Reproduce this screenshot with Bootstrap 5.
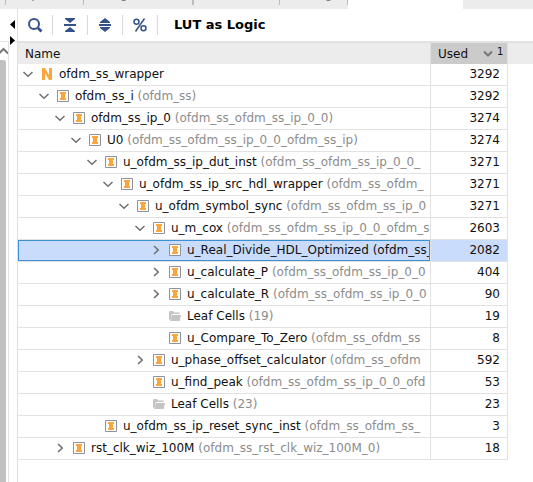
<!DOCTYPE html>
<html lang="en">
<head>
<meta charset="utf-8">
<meta name="viewport" content="width=device-width, initial-scale=1">
<title>LUT as Logic</title>
<link href="https://cdn.jsdelivr.net/npm/bootstrap@5.3.0/dist/css/bootstrap.min.css" rel="stylesheet">
<style>
body{font-family:"DejaVu Sans",sans-serif;font-size:12px;line-height:16px;color:#111;background:#fff}
svg{display:block}
button{border:0;background:none;padding:0;color:inherit}
.tabstrip{height:9px;background:#ececec}
.tabstrip button{flex:none;height:19px;margin-top:-14px;padding-left:10px;line-height:16px;color:#808080;border-right:1px solid #bdbdbd;display:flex;align-items:flex-start}
.tabstrip .lead-in{width:6px;padding:0}
.tabstrip .w-reports{width:78px}
.tabstrip .w-runs{width:110px;border-right-width:2px}
.tabstrip .w-power{width:86px}
.tabstrip .w-timing{width:68px;padding-left:12px}
.tabstrip .w-current{width:115px;height:23px;background:#fff;border:0}
.rail{width:17px;flex:none}
.rail-top{height:33px;padding:11px 0 0 10px;border-bottom:1px solid #e6e6e6}
.rail-top svg+svg{margin-top:7px}
.track{width:9px;border-right:1px solid #e2e2e2}
.track button{height:18px;width:8px}
.thumb{width:6px;background:#c1c1c1;border-top-right-radius:3px}
.pane{border-left:1px solid #e0e0e0;min-width:0}
.tools{height:32px}
.tools button{width:34px;height:20px}
.tools button svg{margin:auto}
.sep{width:1px;height:20px;background:#dadada}
h1{font-size:13px;line-height:16px;font-weight:700;color:#000}
.tree{table-layout:fixed;border-collapse:separate;border-spacing:0}
.num{width:78px}
.rest{width:25px}
.tree th{height:23px;padding:0 0 0 7px;background:#ececec;border-top:2px solid #e2e2e2;font-weight:400;line-height:16px}
.tree th.sorted{background:#cbcbcb;border-left:1px solid #e0e0e0;border-right:1px solid #e0e0e0}
.sorted svg{margin-left:15px;margin-right:4px}
.order{font-size:10px;line-height:12px}
.tree td{height:22px;padding:0;border-bottom:1px solid #e2e2e2;white-space:nowrap;overflow:hidden}
.tree td.val{border-left:1px solid #e2e2e2;border-right:1px solid #e2e2e2;text-align:right;padding:0 7px 2px 0}
.tree td.blank{border:0}
.node{height:21px;padding-bottom:1px;padding-left:calc(4px + var(--d)*16px);overflow:hidden}
.node button,.node .gap-box{flex:none;width:12px;height:12px;margin-right:7px}
.node>svg{flex:none;margin-right:6px}
.node i{font-style:normal;color:#8c8c8c;white-space:pre}
.picked td:not(.blank){background:#c9dcfc}
.picked .node{border:1px solid #3c8fd2;padding-left:calc(3px + var(--d)*16px)}
.picked .node i{color:inherit}
.d0{--d:0}.d1{--d:1}.d2{--d:2}.d3{--d:3}.d4{--d:4}.d5{--d:5}.d6{--d:6}.d7{--d:7}.d8{--d:8}
</style>
<script src="https://cdn.jsdelivr.net/npm/bootstrap@5.3.0/dist/js/bootstrap.bundle.min.js"></script>
</head>
<body class="min-vh-100 d-flex flex-column">
<svg width="0" height="0" class="position-absolute" aria-hidden="true">
  <symbol id="open" viewBox="0 0 12 12"><path d="M1.500 4 6 8.200 10.500 4" fill="none" stroke="#707070" stroke-width="1.500"/></symbol>
  <symbol id="shut" viewBox="0 0 12 12"><path d="M4 2 8.200 6 4 10" fill="none" stroke="#707070" stroke-width="1.600"/></symbol>
  <symbol id="inst" viewBox="0 0 12 12"><path d="M.5.5h11v11H.5z" fill="#fff" stroke="#8f9298"/><path d="M3 2h6v2H8v4h1v2H3V8h1V4H3z" fill="#fba63c"/></symbol>
  <symbol id="net" viewBox="0 0 12 12"><path d="M1 0h3l4 7V0h3v12H8L4 5v7H1z" fill="#fba63c"/></symbol>
  <symbol id="folder" viewBox="0 0 12 12"><path d="M0 2q0-1 1-1h3l1 1.500h5.500V4H3L1.500 9.500 0 10z" fill="#c4c4c4"/><path d="M3.200 5H12l-1.200 6H1z" fill="#c4c4c4"/></symbol>
</svg>
<nav class="tabstrip d-flex align-items-start overflow-hidden" aria-label="Panels">
  <button type="button" class="lead-in" aria-label="Previous"></button>
  <button type="button" class="w-reports">Reports</button>
  <button type="button" class="w-runs">Design Runs</button>
  <button type="button" class="w-power" aria-label="Power"></button>
  <button type="button" class="w-timing">Timing</button>
  <button type="button" class="w-current" aria-label="Utilization"></button>
</nav>
<div class="d-flex flex-grow-1">
  <aside class="rail d-flex flex-column">
    <div class="rail-top">
      <svg width="5" height="9"><path d="M5 0v9L0 4.500z"/></svg>
      <svg width="5" height="9"><path d="M0 0v9l5-4.500z"/></svg>
    </div>
    <div class="track flex-grow-1 d-flex flex-column">
      <button type="button" aria-label="Scroll up"><svg width="8" height="18"><path d="M-1 11.500 3.500 7 8 11.500" fill="none" stroke="#777" stroke-width="2"/></svg></button>
      <div class="thumb flex-grow-1"></div>
    </div>
  </aside>
  <main class="pane flex-grow-1">
    <div class="tools d-flex align-items-center">
      <button type="button" aria-label="Search"><svg width="16" height="16" fill="none" stroke="#34528a"><circle cx="7" cy="7" r="5" stroke-width="2"/><path d="m11 11 3.500 3.500" stroke-width="2.800"/></svg></button>
      <span class="sep"></span>
      <button type="button" aria-label="Collapse all"><svg width="12" height="14" fill="#34528a"><path d="M1 0h10v1L6 5 1 1zM0 6h12v2H0zM1 14h10v-1L6 9l-5 4z"/></svg></button>
      <span class="sep"></span>
      <button type="button" aria-label="Expand all"><svg width="12" height="14" fill="#34528a"><path d="m6 0 5 4v1H1V4zM0 6h12v2H0zM6 14l5-4V9H1v1z"/></svg></button>
      <span class="sep"></span>
      <button type="button" aria-label="Show percentage"><svg width="14" height="14" fill="none" stroke="#34528a" stroke-width="1.500"><circle cx="3.500" cy="3.800" r="2.500"/><circle cx="10.500" cy="10.200" r="2.500"/><path d="M11.500.5 2.500 13.500"/></svg></button>
      <span class="sep"></span>
      <h1 class="mb-0 ms-3">LUT as Logic</h1>
    </div>
    <table class="tree w-100">
      <colgroup><col><col class="num"><col class="rest"></colgroup>
      <thead><tr><th scope="col">Name</th><th scope="col" class="sorted"><div class="d-flex align-items-center"><span>Used</span><svg class="align-self-start mt-1" width="10" height="8"><path d="M1 1.500 5 5.500 9 1.500" fill="none" stroke="#777" stroke-width="2"/></svg><span class="order align-self-start">1</span></div></th><th></th></tr></thead>
      <tbody>
        <tr><td><div class="node d0 d-flex align-items-center"><button type="button" aria-label="Collapse"><svg width="12" height="12"><use href="#open"/></svg></button><svg width="12" height="12"><use href="#net"/></svg>ofdm_ss_wrapper</div></td><td class="val">3292</td><td class="blank"></td></tr>
        <tr><td><div class="node d1 d-flex align-items-center"><button type="button" aria-label="Collapse"><svg width="12" height="12"><use href="#open"/></svg></button><svg width="12" height="12"><use href="#inst"/></svg>ofdm_ss_i<i> (ofdm_ss)</i></div></td><td class="val">3292</td><td class="blank"></td></tr>
        <tr><td><div class="node d2 d-flex align-items-center"><button type="button" aria-label="Collapse"><svg width="12" height="12"><use href="#open"/></svg></button><svg width="12" height="12"><use href="#inst"/></svg>ofdm_ss_ip_0<i> (ofdm_ss_ofdm_ss_ip_0_0)</i></div></td><td class="val">3274</td><td class="blank"></td></tr>
        <tr><td><div class="node d3 d-flex align-items-center"><button type="button" aria-label="Collapse"><svg width="12" height="12"><use href="#open"/></svg></button><svg width="12" height="12"><use href="#inst"/></svg>U0<i> (ofdm_ss_ofdm_ss_ip_0_0_ofdm_ss_ip)</i></div></td><td class="val">3274</td><td class="blank"></td></tr>
        <tr><td><div class="node d4 d-flex align-items-center"><button type="button" aria-label="Collapse"><svg width="12" height="12"><use href="#open"/></svg></button><svg width="12" height="12"><use href="#inst"/></svg>u_ofdm_ss_ip_dut_inst<i> (ofdm_ss_ofdm_ss_ip_0_0_</i></div></td><td class="val">3271</td><td class="blank"></td></tr>
        <tr><td><div class="node d5 d-flex align-items-center"><button type="button" aria-label="Collapse"><svg width="12" height="12"><use href="#open"/></svg></button><svg width="12" height="12"><use href="#inst"/></svg>u_ofdm_ss_ip_src_hdl_wrapper<i> (ofdm_ss_ofdm_</i></div></td><td class="val">3271</td><td class="blank"></td></tr>
        <tr><td><div class="node d6 d-flex align-items-center"><button type="button" aria-label="Collapse"><svg width="12" height="12"><use href="#open"/></svg></button><svg width="12" height="12"><use href="#inst"/></svg>u_ofdm_symbol_sync<i> (ofdm_ss_ofdm_ss_ip_0</i></div></td><td class="val">3271</td><td class="blank"></td></tr>
        <tr><td><div class="node d7 d-flex align-items-center"><button type="button" aria-label="Collapse"><svg width="12" height="12"><use href="#open"/></svg></button><svg width="12" height="12"><use href="#inst"/></svg>u_m_cox<i> (ofdm_ss_ofdm_ss_ip_0_0_ofdm_s</i></div></td><td class="val">2603</td><td class="blank"></td></tr>
        <tr class="picked"><td><div class="node d8 d-flex align-items-center"><button type="button" aria-label="Expand"><svg width="12" height="12"><use href="#shut"/></svg></button><svg width="12" height="12"><use href="#inst"/></svg>u_Real_Divide_HDL_Optimized<i> (ofdm_ss_</i></div></td><td class="val">2082</td><td class="blank"></td></tr>
        <tr><td><div class="node d8 d-flex align-items-center"><button type="button" aria-label="Expand"><svg width="12" height="12"><use href="#shut"/></svg></button><svg width="12" height="12"><use href="#inst"/></svg>u_calculate_P<i> (ofdm_ss_ofdm_ss_ip_0_0</i></div></td><td class="val">404</td><td class="blank"></td></tr>
        <tr><td><div class="node d8 d-flex align-items-center"><button type="button" aria-label="Expand"><svg width="12" height="12"><use href="#shut"/></svg></button><svg width="12" height="12"><use href="#inst"/></svg>u_calculate_R<i> (ofdm_ss_ofdm_ss_ip_0_0</i></div></td><td class="val">90</td><td class="blank"></td></tr>
        <tr><td><div class="node d8 d-flex align-items-center"><span class="gap-box"></span><svg width="12" height="12"><use href="#folder"/></svg>Leaf Cells<i> (19)</i></div></td><td class="val">19</td><td class="blank"></td></tr>
        <tr><td><div class="node d8 d-flex align-items-center"><span class="gap-box"></span><svg width="12" height="12"><use href="#inst"/></svg>u_Compare_To_Zero<i> (ofdm_ss_ofdm_ss</i></div></td><td class="val">8</td><td class="blank"></td></tr>
        <tr><td><div class="node d7 d-flex align-items-center"><button type="button" aria-label="Expand"><svg width="12" height="12"><use href="#shut"/></svg></button><svg width="12" height="12"><use href="#inst"/></svg>u_phase_offset_calculator<i> (ofdm_ss_ofdm</i></div></td><td class="val">592</td><td class="blank"></td></tr>
        <tr><td><div class="node d7 d-flex align-items-center"><span class="gap-box"></span><svg width="12" height="12"><use href="#inst"/></svg>u_find_peak<i> (ofdm_ss_ofdm_ss_ip_0_0_ofd</i></div></td><td class="val">53</td><td class="blank"></td></tr>
        <tr><td><div class="node d7 d-flex align-items-center"><span class="gap-box"></span><svg width="12" height="12"><use href="#folder"/></svg>Leaf Cells<i> (23)</i></div></td><td class="val">23</td><td class="blank"></td></tr>
        <tr><td><div class="node d4 d-flex align-items-center"><span class="gap-box"></span><svg width="12" height="12"><use href="#inst"/></svg>u_ofdm_ss_ip_reset_sync_inst<i> (ofdm_ss_ofdm_ss_</i></div></td><td class="val">3</td><td class="blank"></td></tr>
        <tr><td><div class="node d2 d-flex align-items-center"><button type="button" aria-label="Expand"><svg width="12" height="12"><use href="#shut"/></svg></button><svg width="12" height="12"><use href="#inst"/></svg>rst_clk_wiz_100M<i> (ofdm_ss_rst_clk_wiz_100M_0)</i></div></td><td class="val">18</td><td class="blank"></td></tr>
      </tbody>
    </table>
  </main>
</div>
</body>
</html>
